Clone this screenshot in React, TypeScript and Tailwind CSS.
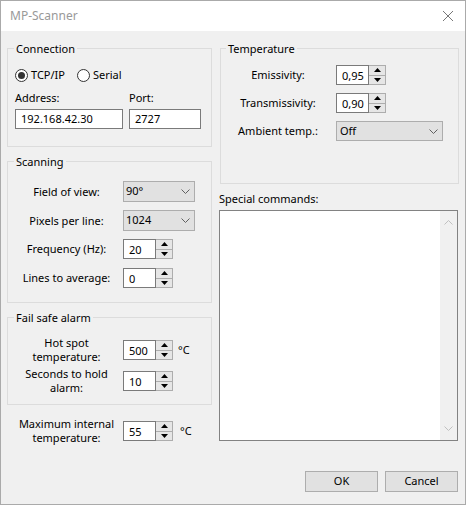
import React from "react";

const Chevron = ({ up = false, color = "#606060" }: { up?: boolean; color?: string }) => (
  <svg width="9" height="5" viewBox="0 0 9 5" className={up ? "rotate-180" : ""}>
    <path d="M0.5 0.5 L4.5 4.5 L8.5 0.5" fill="none" stroke={color} strokeWidth="1" />
  </svg>
);

const Tri = ({ up }: { up?: boolean }) => (
  <svg width="7" height="4" viewBox="0 0 7 4">
    <path d={up ? "M3.5 0 L7 4 L0 4 Z" : "M0 0 L7 0 L3.5 4 Z"} fill="#000" />
  </svg>
);

function Spin({ value }: { value: string }) {
  return (
    <div className="flex h-[20px] shrink-0">
      <div className="flex w-[33px] items-center border border-[#7a7a7a] bg-white pl-[5px] leading-none">
        {value}
      </div>
      <div className="flex w-[17px] flex-col border-y border-r border-[#adadad] bg-[#f0f0f0]">
        <div className="flex flex-1 items-center justify-center border-b border-[#adadad] bg-[#e6e6e6]">
          <Tri up />
        </div>
        <div className="flex flex-1 items-center justify-center bg-[#e6e6e6]">
          <Tri />
        </div>
      </div>
    </div>
  );
}

function Combo({ value, width }: { value: string; width: string }) {
  return (
    <div
      className={`flex h-[21px] shrink-0 items-center justify-between border border-[#adadad] bg-[#e1e1e1] pl-[2px] pr-[4px] ${width}`}
    >
      <span>{value}</span>
      <Chevron />
    </div>
  );
}

function Group({
  title,
  className,
  children,
}: {
  title: string;
  className?: string;
  children: React.ReactNode;
}) {
  return (
    <fieldset className={`border border-[#dcdcdc] ${className ?? ""}`}>
      <legend className="px-[2px] leading-[15px]">{title}</legend>
      {children}
    </fieldset>
  );
}

function Row({
  label,
  labelWidth,
  children,
  className,
}: {
  label: React.ReactNode;
  labelWidth: string;
  children: React.ReactNode;
  className?: string;
}) {
  return (
    <div className={`flex h-[20px] items-center ${className ?? ""}`}>
      <div
        className={`flex shrink-0 items-center justify-center whitespace-nowrap text-center leading-[14px] ${labelWidth}`}
      >
        <span>{label}</span>
      </div>
      {children}
    </div>
  );
}

export default function App() {
  return (
    <div className="flex h-[505px] w-[466px] flex-col border border-[#aaaaaa] bg-[#f0f0f0] font-['Noto_Sans',sans-serif] text-[11px] text-black">
      {/* title bar */}
      <div className="flex h-[30px] shrink-0 items-center justify-between bg-white pl-[9px] pr-[12px]">
        <span className="text-[12px] text-[#999999]">MP-Scanner</span>
        <svg width="10" height="10" viewBox="0 0 10 10">
          <path d="M0 0 L10 10 M10 0 L0 10" stroke="#777" strokeWidth="1" />
        </svg>
      </div>

      <div className="flex flex-1 flex-col px-[6px] pt-[10px]">
        <div className="flex gap-[7px]">
          {/* left column */}
          <div className="flex w-[205px] flex-col">
            <Group title="Connection" className="pl-[6px] pr-[9px] pb-[17px]">
              <div className="ml-[1px] mt-[11px] flex h-[16px] items-center">
                <span className="flex h-[13px] w-[13px] items-center justify-center rounded-full border border-[#333333] bg-white">
                  <span className="h-[7px] w-[7px] rounded-full bg-[#333333]" />
                </span>
                <span className="ml-[3px]">TCP/IP</span>
                <span className="ml-[12px] h-[13px] w-[13px] rounded-full border border-[#333333] bg-white" />
                <span className="ml-[3px]">Serial</span>
              </div>
              <div className="ml-[1px] mt-[7px] flex gap-[6px]">
                <div className="flex w-[108px] flex-col">
                  <span className="h-[16px] leading-[16px]">Address:</span>
                  <div className="mt-[3px] flex h-[20px] items-center border border-[#7a7a7a] bg-white pl-[5px]">
                    192.168.42.30
                  </div>
                </div>
                <div className="flex w-[72px] flex-col">
                  <span className="h-[16px] leading-[16px]">Port:</span>
                  <div className="mt-[3px] flex h-[20px] items-center border border-[#7a7a7a] bg-white pl-[5px]">
                    2727
                  </div>
                </div>
              </div>
            </Group>

            <Group title="Scanning" className="mt-[7px] pl-[6px] pb-[14px]">
              <div className="ml-[1px] flex flex-col">
                <Row label="Field of view:" labelWidth="w-[103px] mr-[5px]" className="mt-[12px] h-[21px]">
                  <Combo value="90°" width="w-[72px]" />
                </Row>
                <Row label="Pixels per line:" labelWidth="w-[103px] mr-[5px]" className="mt-[8px] h-[21px]">
                  <Combo value="1024" width="w-[72px]" />
                </Row>
                <Row label="Frequency (Hz):" labelWidth="w-[103px] mr-[5px]" className="mt-[8px]">
                  <Spin value="20" />
                </Row>
                <Row label="Lines to average:" labelWidth="w-[103px] mr-[5px]" className="mt-[9px]">
                  <Spin value="0" />
                </Row>
              </div>
            </Group>

            <Group title="Fail safe alarm" className="mt-[7px] pl-[6px] pb-[13px]">
              <div className="ml-[1px] flex flex-col">
                <Row
                  label={
                    <>
                      Hot spot
                      <br />
                      temperature:
                    </>
                  }
                  labelWidth="w-[103px] mr-[5px]"
                  className="mt-[15px]"
                >
                  <Spin value="500" />
                  <span className="ml-[5px]">°C</span>
                </Row>
                <Row
                  label={
                    <>
                      Seconds to hold
                      <br />
                      alarm:
                    </>
                  }
                  labelWidth="w-[103px] mr-[5px]"
                  className="mt-[11px]"
                >
                  <Spin value="10" />
                </Row>
              </div>
            </Group>

            <Row
              label={
                <>
                  Maximum internal
                  <br />
                  temperature:
                </>
              }
              labelWidth="w-[103px] mr-[5px]"
              className="ml-[8px] mt-[16px]"
            >
              <Spin value="55" />
              <span className="ml-[7px]">°C</span>
            </Row>
          </div>

          {/* right column */}
          <div className="flex w-[240px] flex-col">
            <Group title="Temperature" className="ml-[1px] pl-[5px] pb-[42px]">
              <div className="flex flex-col">
                <Row label="Emissivity:" labelWidth="w-[104px] mr-[6px]" className="mt-[9px]">
                  <Spin value="0,95" />
                </Row>
                <Row label="Transmissivity:" labelWidth="w-[104px] mr-[6px]" className="mt-[8px]">
                  <Spin value="0,90" />
                </Row>
                <Row label="Ambient temp.:" labelWidth="w-[104px] mr-[6px]" className="mt-[8px]">
                  <div className="flex h-[20px] w-[107px] items-center justify-between border border-[#adadad] bg-[#e1e1e1] pl-[3px] pr-[4px]">
                    <span>Off</span>
                    <Chevron />
                  </div>
                </Row>
              </div>
            </Group>

            <span className="mt-[7px] h-[16px] leading-[16px]">Special commands:</span>
            <div className="mt-[3px] flex h-[231px] w-[239px] border border-[#828282] bg-white">
              <div className="flex-1" />
              <div className="flex w-[17px] flex-col items-center justify-between bg-[#f0f0f0] py-[9px]">
                <Chevron up color="#c0c0c0" />
                <Chevron color="#c0c0c0" />
              </div>
            </div>
          </div>
        </div>

        <div className="mt-[30px] flex justify-end gap-[7px] pr-[1px]">
          <button className="h-[21px] w-[73px] border border-[#adadad] bg-[#e1e1e1]">OK</button>
          <button className="h-[21px] w-[73px] border border-[#adadad] bg-[#e1e1e1]">Cancel</button>
        </div>
      </div>
    </div>
  );
}
